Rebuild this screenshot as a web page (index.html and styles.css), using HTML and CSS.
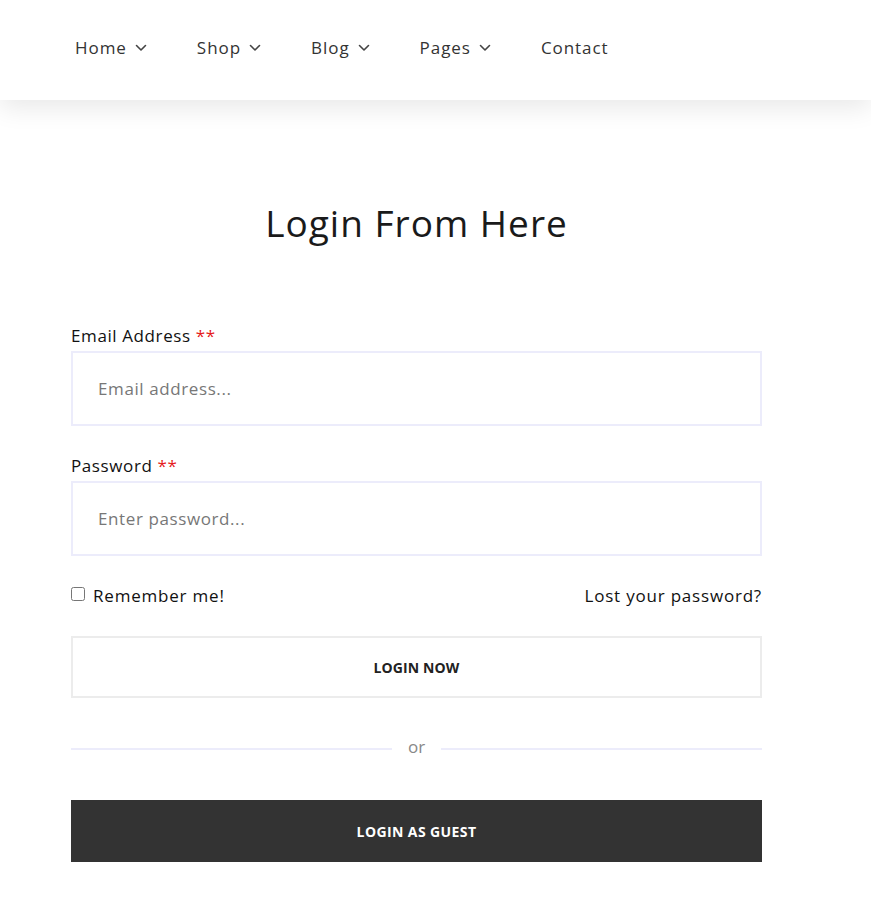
FILE: index.html
```html
<!DOCTYPE html>
<html lang="en">
<head>
<meta charset="utf-8">
<title>Login</title>
<link rel="stylesheet" href="styles.css">
</head>
<body>
<header class="site-header">
  <nav class="main-nav">
    <a class="nav-item" href="#">Home <svg class="chev" viewBox="0 0 12 8" width="12" height="8"><path d="M1.5 1.5 L6 6 L10.5 1.5" fill="none" stroke="currentColor" stroke-width="1.6" stroke-linecap="round" stroke-linejoin="round"/></svg></a>
    <a class="nav-item" href="#">Shop <svg class="chev" viewBox="0 0 12 8" width="12" height="8"><path d="M1.5 1.5 L6 6 L10.5 1.5" fill="none" stroke="currentColor" stroke-width="1.6" stroke-linecap="round" stroke-linejoin="round"/></svg></a>
    <a class="nav-item" href="#">Blog <svg class="chev" viewBox="0 0 12 8" width="12" height="8"><path d="M1.5 1.5 L6 6 L10.5 1.5" fill="none" stroke="currentColor" stroke-width="1.6" stroke-linecap="round" stroke-linejoin="round"/></svg></a>
    <a class="nav-item" href="#">Pages <svg class="chev" viewBox="0 0 12 8" width="12" height="8"><path d="M1.5 1.5 L6 6 L10.5 1.5" fill="none" stroke="currentColor" stroke-width="1.6" stroke-linecap="round" stroke-linejoin="round"/></svg></a>
    <a class="nav-item" href="#">Contact</a>
  </nav>
</header>
<main class="login-wrap">
  <h1 class="login-title">Login From Here</h1>
  <form class="login-form">
    <label class="field-label" for="email">Email Address <span class="req">**</span></label>
    <input class="field-input" id="email" type="email" placeholder="Email address...">
    <label class="field-label" for="pass">Password <span class="req">**</span></label>
    <input class="field-input" id="pass" type="password" placeholder="Enter password...">
    <div class="form-row">
      <label class="remember"><input type="checkbox" class="check"> Remember me!</label>
      <a class="lost" href="#">Lost your password?</a>
    </div>
    <button type="button" class="btn btn-outline">Login Now</button>
    <div class="divider"><span class="line"></span><span class="or">or</span><span class="line"></span></div>
    <button type="button" class="btn btn-dark">Login as Guest</button>
  </form>
</main>
</body>
</html>
```
FILE: styles.css
```css
* { box-sizing: border-box; }
html, body { margin: 0; padding: 0; background: #fff; }
body {
  font-family: "Open Sans", "Noto Sans", sans-serif;
  color: #111;
}
.site-header {
  height: 100px;
  background: #fff;
  box-shadow: 0 8px 24px rgba(0,0,0,0.09);
  display: flex;
  align-items: center;
  padding-left: 75px;
  padding-bottom: 6px;
}
.main-nav { display: flex; gap: 50px; align-items: center; }
.nav-item {
  display: flex; align-items: center; gap: 8px;
  font-size: 17px;
  letter-spacing: 0.95px;
  color: #333;
  text-decoration: none;
}
.chev { color: #444; margin-top: 2px; }
.login-wrap {
  width: 691px;
  margin-left: 71px;
  padding-top: 98px;
}
.login-title {
  margin: 0 0 76px;
  text-align: center;
  font-size: 37px;
  letter-spacing: 1px;
  font-weight: 400;
  color: #1a1a1a;
  line-height: 50px;
}
.login-form { display: flex; flex-direction: column; }
.field-label {
  font-size: 17px;
  letter-spacing: 0.6px;
  line-height: 24px;
  margin-bottom: 3px;
  color: #111;
}
.req { color: #e51a1a; }
.field-input {
  height: 75px;
  border: 2px solid #ececfb;
  padding: 0 25px;
  font-family: inherit;
  font-size: 17px;
  letter-spacing: 0.6px;
  color: #333;
  margin-bottom: 28px;
  outline: none;
}
.field-input::placeholder { color: #777; }
.form-row {
  display: flex; justify-content: space-between; align-items: center;
  font-size: 17px;
  letter-spacing: 0.8px;
  line-height: 24px;
}
.remember { display: flex; align-items: center; gap: 8px; color: #111; }
.check { margin: 0; width: 14px; height: 14px; position: relative; top: -2px; }
.lost { color: #111; text-decoration: none; }
.btn {
  height: 62px;
  font-family: inherit;
  font-size: 14px;
  font-weight: 700;
  text-transform: uppercase;
  cursor: pointer;
}
.btn-outline {
  margin-top: 28px;
  background: #fff;
  border: 2px solid #ececec;
  color: #222;
  letter-spacing: 0.1px;
}
.divider {
  display: flex; align-items: center;
  margin: 39px 0 39px;
  height: 24px;
}
.line { flex: 1; height: 2px; background: #ececfb; }
.or { padding: 0 16px; color: #888; font-size: 17px; line-height: 24px; margin-top: -4px; }
.btn-dark {
  background: #333;
  border: none;
  color: #fff;
  letter-spacing: 0.4px;
}
```
